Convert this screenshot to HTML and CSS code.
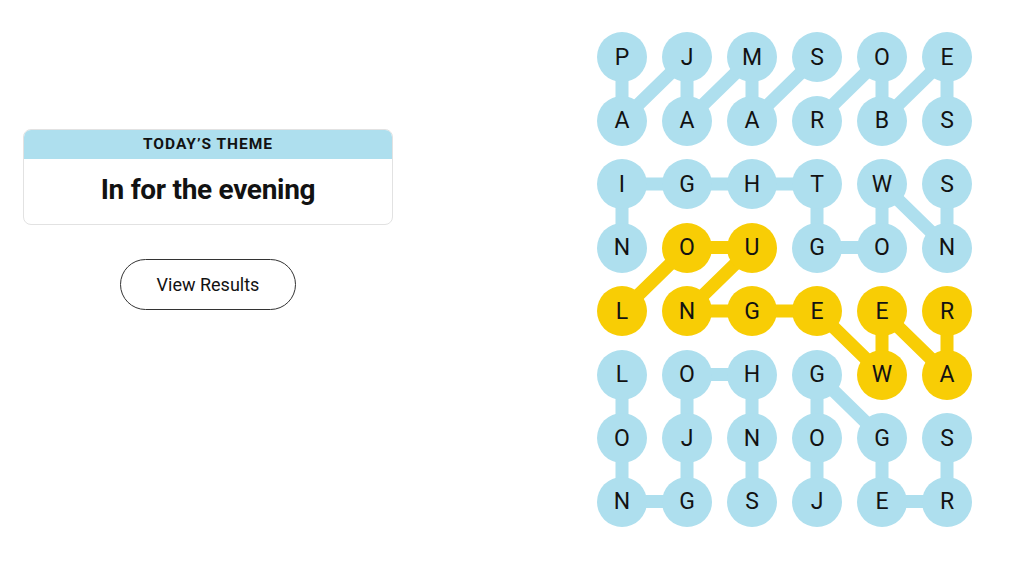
FILE: index.html
```html
<!DOCTYPE html>
<html lang="en">
<head>
<meta charset="utf-8">
<title>Strands</title>
<link rel="stylesheet" href="styles.css">
</head>
<body>
<main class="page">
  <section class="side">
    <div class="theme-card">
      <div class="theme-head">TODAY’S THEME</div>
      <div class="theme-body">In for the evening</div>
    </div>
    <button class="results-btn" type="button">View Results</button>
  </section>

  <section class="board">
    <svg class="links" viewBox="0 0 375 494.5" aria-hidden="true">
      <g class="blue">
        <polyline points="25,25 25,88.5 90,25 90,88.5 155,25 155,88.5 220,25"/>
        <polyline points="220,88.5 285,25 285,88.5 350,25 350,88.5"/>
        <polyline points="25,215.5 25,152 90,152 155,152 220,152 220,215.5 285,215.5 285,152 350,215.5 350,152"/>
        <polyline points="25,342.5 25,406 25,469.5 90,469.5 90,406 90,342.5 155,342.5 155,406 155,469.5"/>
        <polyline points="220,469.5 220,406 220,342.5 285,406 285,469.5 350,469.5 350,406"/>
      </g>
      <g class="gold">
        <polyline points="25,279 90,215.5 155,215.5 90,279 155,279 220,279 285,342.5 285,279 350,342.5 350,279"/>
      </g>
    </svg>
    <div class="cell">P</div><div class="cell">J</div><div class="cell">M</div><div class="cell">S</div><div class="cell">O</div><div class="cell">E</div>
    <div class="cell">A</div><div class="cell">A</div><div class="cell">A</div><div class="cell">R</div><div class="cell">B</div><div class="cell">S</div>
    <div class="cell">I</div><div class="cell">G</div><div class="cell">H</div><div class="cell">T</div><div class="cell">W</div><div class="cell">S</div>
    <div class="cell">N</div><div class="cell sp">O</div><div class="cell sp">U</div><div class="cell">G</div><div class="cell">O</div><div class="cell">N</div>
    <div class="cell sp">L</div><div class="cell sp">N</div><div class="cell sp">G</div><div class="cell sp">E</div><div class="cell sp">E</div><div class="cell sp">R</div>
    <div class="cell">L</div><div class="cell">O</div><div class="cell">H</div><div class="cell">G</div><div class="cell sp">W</div><div class="cell sp">A</div>
    <div class="cell">O</div><div class="cell">J</div><div class="cell">N</div><div class="cell">O</div><div class="cell">G</div><div class="cell">S</div>
    <div class="cell">N</div><div class="cell">G</div><div class="cell">S</div><div class="cell">J</div><div class="cell">E</div><div class="cell">R</div>
  </section>
</main>
</body>
</html>
```

FILE: styles.css
```css
* { box-sizing: border-box; }
html, body {
  margin: 0;
  padding: 0;
  background: #ffffff;
}
body {
  font-family: "Roboto", "Liberation Sans", Arial, sans-serif;
  color: #121212;
  width: 1024px;
  height: 561px;
  overflow: hidden;
}
.page {
  display: flex;
  align-items: flex-start;
}
.side {
  width: 370px;
  margin-left: 23px;
  margin-top: 129px;
  display: flex;
  flex-direction: column;
  align-items: center;
}
.theme-card {
  width: 100%;
  border: 1px solid #e2e2e2;
  border-radius: 8px;
  overflow: hidden;
}
.theme-head {
  height: 29px;
  background: #aedfee;
  text-align: center;
  font-weight: 700;
  font-size: 15.5px;
  letter-spacing: 1px;
  line-height: 29px;
  color: #121212;
}
.theme-body {
  height: 65px;
  display: flex;
  align-items: center;
  justify-content: center;
  font-weight: 700;
  font-size: 28px;
  letter-spacing: -0.3px;
  padding-bottom: 4px;
  color: #121212;
}
.results-btn {
  margin-top: 34px;
  width: 176px;
  height: 51px;
  border: 1.5px solid #333333;
  border-radius: 26px;
  background: #ffffff;
  font-family: "Roboto", "Liberation Sans", Arial, sans-serif;
  font-size: 18px;
  color: #121212;
  padding: 0;
}
.board {
  position: relative;
  margin-left: 204px;
  margin-top: 32px;
  display: grid;
  grid-template-columns: repeat(6, 50px);
  grid-auto-rows: 50px;
  column-gap: 15px;
  row-gap: 13.5px;
}
.links {
  position: absolute;
  left: 0;
  top: 0;
  width: 375px;
  height: 494.5px;
  z-index: 0;
}
.links polyline {
  fill: none;
  stroke-width: 13;
  stroke-linejoin: miter;
  stroke-linecap: butt;
}
.links .blue polyline { stroke: #aedfee; }
.links .gold polyline { stroke: #f8cd05; }
.cell {
  position: relative;
  z-index: 1;
  width: 50px;
  height: 50px;
  border-radius: 50%;
  background: #aedfee;
  display: flex;
  align-items: center;
  justify-content: center;
  font-size: 23px;
  font-weight: 400;
  color: #121212;
  text-transform: uppercase;
}
.cell.sp { background: #f8cd05; }
```
